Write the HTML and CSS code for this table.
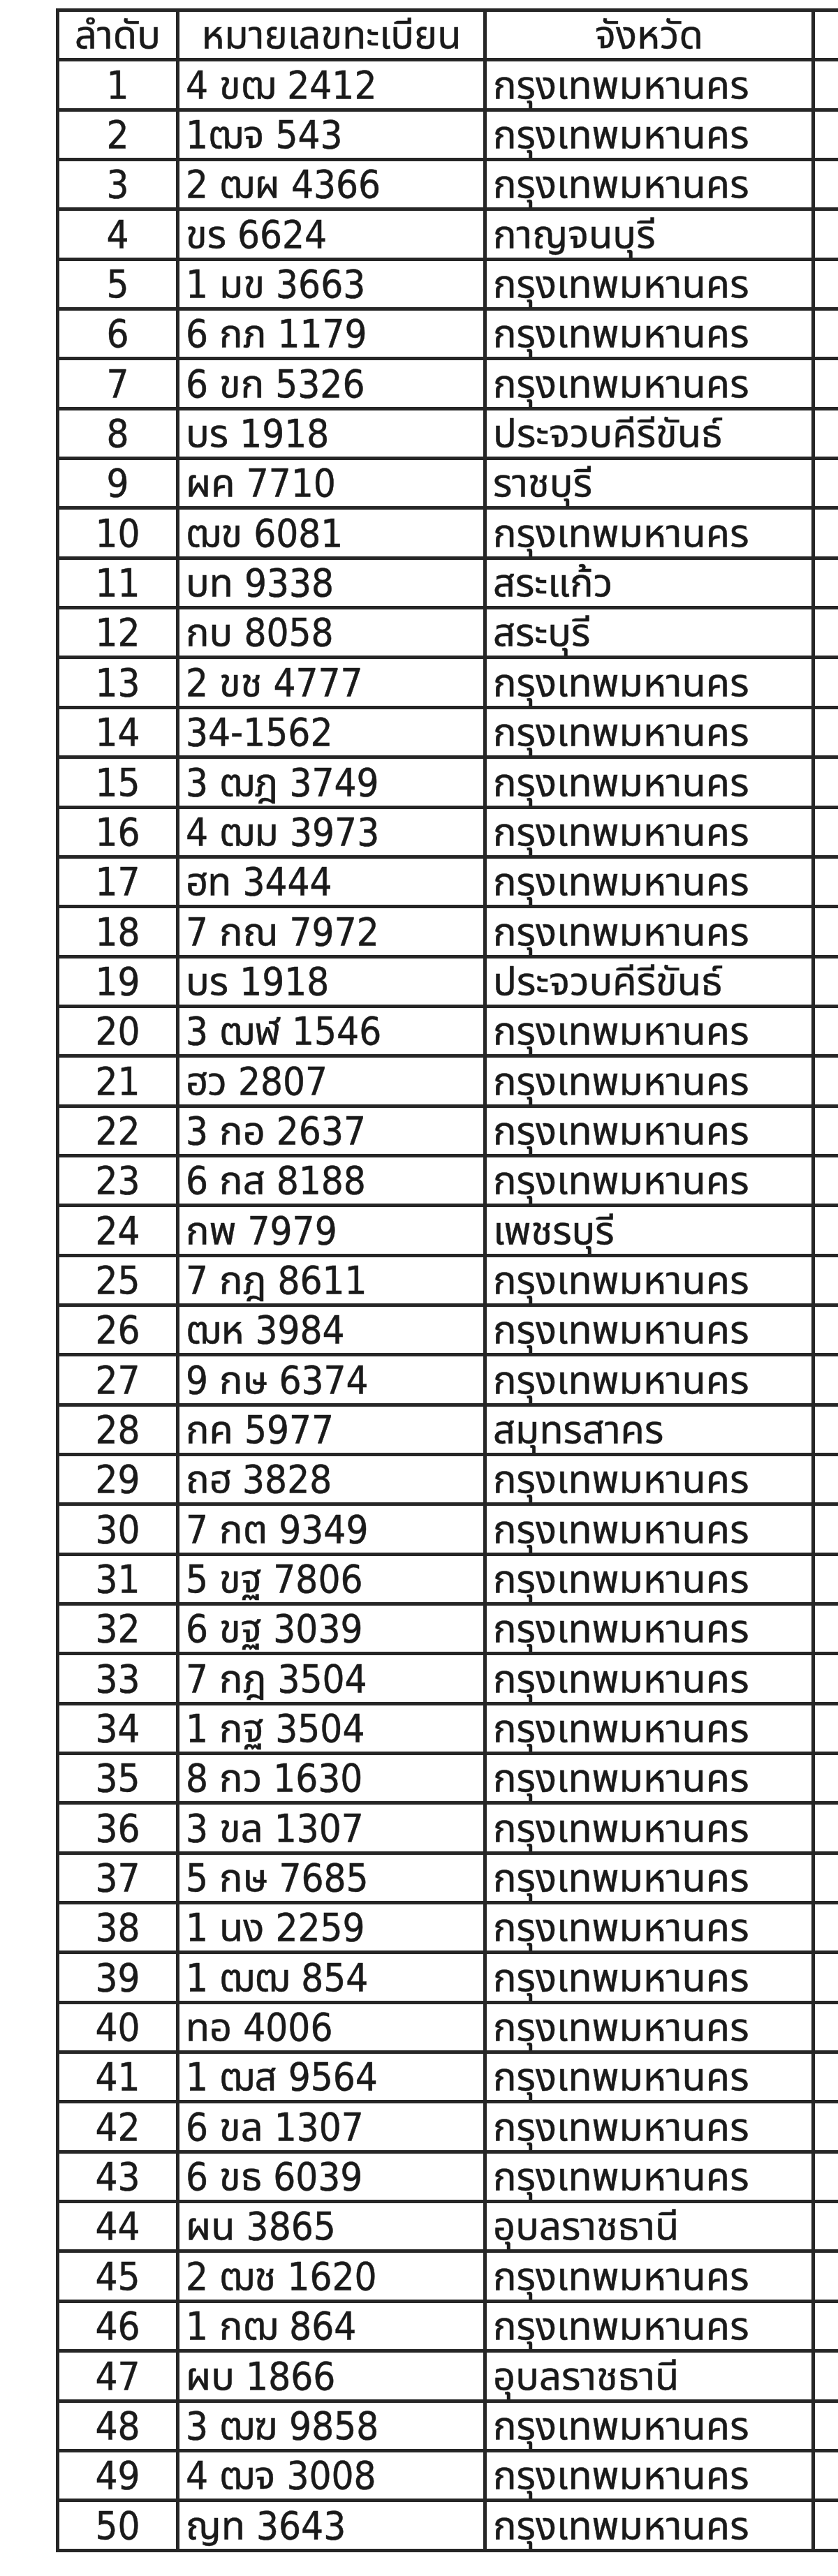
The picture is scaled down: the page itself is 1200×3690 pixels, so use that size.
FILE: index.html
```html
<!DOCTYPE html>
<html lang="th">
<head>
<meta charset="utf-8">
<title>รายการทะเบียนรถ</title>
<link rel="stylesheet" href="styles.css">
</head>
<body>
<div class="sheet">
  <div class="cell head">ลำดับ</div>
  <div class="cell head">หมายเลขทะเบียน</div>
  <div class="cell head">จังหวัด</div>
  <div class="cell extra"></div>

  <div class="cell num">1</div><div class="cell plate">4 ขฒ 2412</div><div class="cell prov">กรุงเทพมหานคร</div><div class="cell extra"></div>
  <div class="cell num">2</div><div class="cell plate">1ฒจ 543</div><div class="cell prov">กรุงเทพมหานคร</div><div class="cell extra"></div>
  <div class="cell num">3</div><div class="cell plate">2 ฒผ 4366</div><div class="cell prov">กรุงเทพมหานคร</div><div class="cell extra"></div>
  <div class="cell num">4</div><div class="cell plate">ขร 6624</div><div class="cell prov">กาญจนบุรี</div><div class="cell extra"></div>
  <div class="cell num">5</div><div class="cell plate">1 มข 3663</div><div class="cell prov">กรุงเทพมหานคร</div><div class="cell extra"></div>
  <div class="cell num">6</div><div class="cell plate">6 กภ 1179</div><div class="cell prov">กรุงเทพมหานคร</div><div class="cell extra"></div>
  <div class="cell num">7</div><div class="cell plate">6 ขก 5326</div><div class="cell prov">กรุงเทพมหานคร</div><div class="cell extra"></div>
  <div class="cell num">8</div><div class="cell plate">บร 1918</div><div class="cell prov">ประจวบคีรีขันธ์</div><div class="cell extra"></div>
  <div class="cell num">9</div><div class="cell plate">ผค 7710</div><div class="cell prov">ราชบุรี</div><div class="cell extra"></div>
  <div class="cell num">10</div><div class="cell plate">ฒข 6081</div><div class="cell prov">กรุงเทพมหานคร</div><div class="cell extra"></div>
  <div class="cell num">11</div><div class="cell plate">บท 9338</div><div class="cell prov">สระแก้ว</div><div class="cell extra"></div>
  <div class="cell num">12</div><div class="cell plate">กบ 8058</div><div class="cell prov">สระบุรี</div><div class="cell extra"></div>
  <div class="cell num">13</div><div class="cell plate">2 ขช 4777</div><div class="cell prov">กรุงเทพมหานคร</div><div class="cell extra"></div>
  <div class="cell num">14</div><div class="cell plate">34-1562</div><div class="cell prov">กรุงเทพมหานคร</div><div class="cell extra"></div>
  <div class="cell num">15</div><div class="cell plate">3 ฒฎ 3749</div><div class="cell prov">กรุงเทพมหานคร</div><div class="cell extra"></div>
  <div class="cell num">16</div><div class="cell plate">4 ฒม 3973</div><div class="cell prov">กรุงเทพมหานคร</div><div class="cell extra"></div>
  <div class="cell num">17</div><div class="cell plate">ฮท 3444</div><div class="cell prov">กรุงเทพมหานคร</div><div class="cell extra"></div>
  <div class="cell num">18</div><div class="cell plate">7 กณ 7972</div><div class="cell prov">กรุงเทพมหานคร</div><div class="cell extra"></div>
  <div class="cell num">19</div><div class="cell plate">บร 1918</div><div class="cell prov">ประจวบคีรีขันธ์</div><div class="cell extra"></div>
  <div class="cell num">20</div><div class="cell plate">3 ฒฬ 1546</div><div class="cell prov">กรุงเทพมหานคร</div><div class="cell extra"></div>
  <div class="cell num">21</div><div class="cell plate">ฮว 2807</div><div class="cell prov">กรุงเทพมหานคร</div><div class="cell extra"></div>
  <div class="cell num">22</div><div class="cell plate">3 กอ 2637</div><div class="cell prov">กรุงเทพมหานคร</div><div class="cell extra"></div>
  <div class="cell num">23</div><div class="cell plate">6 กส 8188</div><div class="cell prov">กรุงเทพมหานคร</div><div class="cell extra"></div>
  <div class="cell num">24</div><div class="cell plate">กพ 7979</div><div class="cell prov">เพชรบุรี</div><div class="cell extra"></div>
  <div class="cell num">25</div><div class="cell plate">7 กฎ 8611</div><div class="cell prov">กรุงเทพมหานคร</div><div class="cell extra"></div>
  <div class="cell num">26</div><div class="cell plate">ฒห 3984</div><div class="cell prov">กรุงเทพมหานคร</div><div class="cell extra"></div>
  <div class="cell num">27</div><div class="cell plate">9 กษ 6374</div><div class="cell prov">กรุงเทพมหานคร</div><div class="cell extra"></div>
  <div class="cell num">28</div><div class="cell plate">กค 5977</div><div class="cell prov">สมุทรสาคร</div><div class="cell extra"></div>
  <div class="cell num">29</div><div class="cell plate">ถฮ 3828</div><div class="cell prov">กรุงเทพมหานคร</div><div class="cell extra"></div>
  <div class="cell num">30</div><div class="cell plate">7 กต 9349</div><div class="cell prov">กรุงเทพมหานคร</div><div class="cell extra"></div>
  <div class="cell num">31</div><div class="cell plate">5 ขฐ 7806</div><div class="cell prov">กรุงเทพมหานคร</div><div class="cell extra"></div>
  <div class="cell num">32</div><div class="cell plate">6 ขฐ 3039</div><div class="cell prov">กรุงเทพมหานคร</div><div class="cell extra"></div>
  <div class="cell num">33</div><div class="cell plate">7 กฎ 3504</div><div class="cell prov">กรุงเทพมหานคร</div><div class="cell extra"></div>
  <div class="cell num">34</div><div class="cell plate">1 กฐ 3504</div><div class="cell prov">กรุงเทพมหานคร</div><div class="cell extra"></div>
  <div class="cell num">35</div><div class="cell plate">8 กว 1630</div><div class="cell prov">กรุงเทพมหานคร</div><div class="cell extra"></div>
  <div class="cell num">36</div><div class="cell plate">3 ขล 1307</div><div class="cell prov">กรุงเทพมหานคร</div><div class="cell extra"></div>
  <div class="cell num">37</div><div class="cell plate">5 กษ 7685</div><div class="cell prov">กรุงเทพมหานคร</div><div class="cell extra"></div>
  <div class="cell num">38</div><div class="cell plate">1 นง 2259</div><div class="cell prov">กรุงเทพมหานคร</div><div class="cell extra"></div>
  <div class="cell num">39</div><div class="cell plate">1 ฒฒ 854</div><div class="cell prov">กรุงเทพมหานคร</div><div class="cell extra"></div>
  <div class="cell num">40</div><div class="cell plate">ทอ 4006</div><div class="cell prov">กรุงเทพมหานคร</div><div class="cell extra"></div>
  <div class="cell num">41</div><div class="cell plate">1 ฒส 9564</div><div class="cell prov">กรุงเทพมหานคร</div><div class="cell extra"></div>
  <div class="cell num">42</div><div class="cell plate">6 ขล 1307</div><div class="cell prov">กรุงเทพมหานคร</div><div class="cell extra"></div>
  <div class="cell num">43</div><div class="cell plate">6 ขธ 6039</div><div class="cell prov">กรุงเทพมหานคร</div><div class="cell extra"></div>
  <div class="cell num">44</div><div class="cell plate">ผน 3865</div><div class="cell prov">อุบลราชธานี</div><div class="cell extra"></div>
  <div class="cell num">45</div><div class="cell plate">2 ฒช 1620</div><div class="cell prov">กรุงเทพมหานคร</div><div class="cell extra"></div>
  <div class="cell num">46</div><div class="cell plate">1 กฒ 864</div><div class="cell prov">กรุงเทพมหานคร</div><div class="cell extra"></div>
  <div class="cell num">47</div><div class="cell plate">ผบ 1866</div><div class="cell prov">อุบลราชธานี</div><div class="cell extra"></div>
  <div class="cell num">48</div><div class="cell plate">3 ฒฆ 9858</div><div class="cell prov">กรุงเทพมหานคร</div><div class="cell extra"></div>
  <div class="cell num">49</div><div class="cell plate">4 ฒจ 3008</div><div class="cell prov">กรุงเทพมหานคร</div><div class="cell extra"></div>
  <div class="cell num">50</div><div class="cell plate">ญท 3643</div><div class="cell prov">กรุงเทพมหานคร</div><div class="cell extra"></div>
</div>
</body>
</html>
```

FILE: styles.css
```css
html, body {
  margin: 0;
  padding: 0;
  background: #ffffff;
}

body {
  overflow: hidden;
}

.sheet {
  margin: 12px 0 0 80px;
  width: 1120px;
  display: grid;
  grid-template-columns: 167px 435px 465px 33px;
  grid-auto-rows: 66.35px;
  gap: 5px;
  padding: 5px 0 5px 5px;
  background: #262626;
  font-family: "DejaVu Sans Condensed", "DejaVu Sans", "Noto Sans Thai", sans-serif;
  font-size: 56px;
  color: #1a1a1a;
  -webkit-text-stroke: 0.5px #1a1a1a;
}

.cell {
  background: #ffffff;
  display: flex;
  align-items: flex-end;
  line-height: 66px;
  white-space: nowrap;
  overflow: hidden;
}

.head,
.num {
  justify-content: center;
}

.plate,
.prov {
  padding-left: 9px;
}
```
